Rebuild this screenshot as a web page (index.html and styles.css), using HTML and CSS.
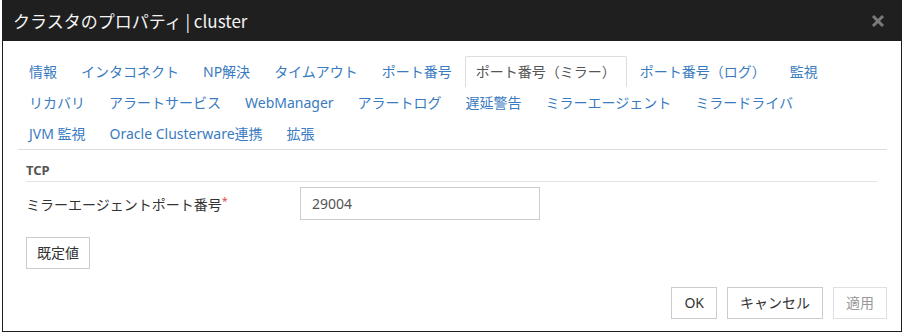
FILE: index.html
```html
<!DOCTYPE html>
<html lang="ja">
<head>
<meta charset="utf-8">
<title>クラスタのプロパティ</title>
<link rel="stylesheet" href="styles.css">
</head>
<body>
<div class="dialog">
  <div class="titlebar">
    <span class="title">クラスタのプロパティ | cluster</span>
    <svg class="close" width="14" height="14" viewBox="0 0 14 14"><path d="M2 2 L12 12 M12 2 L2 12" stroke="#7a7a7a" stroke-width="3" stroke-linecap="butt"/></svg>
  </div>
  <div class="body">
    <ul class="tabs">
      <li class="tab">情報</li>
      <li class="tab">インタコネクト</li>
      <li class="tab">NP解決</li>
      <li class="tab">タイムアウト</li>
      <li class="tab">ポート番号</li>
      <li class="tab active">ポート番号（ミラー）</li>
      <li class="tab">ポート番号（ログ）</li>
      <li class="tab">監視</li>
      <li class="tab">リカバリ</li>
      <li class="tab">アラートサービス</li>
      <li class="tab">WebManager</li>
      <li class="tab">アラートログ</li>
      <li class="tab">遅延警告</li>
      <li class="tab">ミラーエージェント</li>
      <li class="tab">ミラードライバ</li>
      <li class="tab">JVM 監視</li>
      <li class="tab">Oracle Clusterware連携</li>
      <li class="tab">拡張</li>
    </ul>
    <div class="panel">
      <div class="section-title">TCP</div>
      <div class="form-row">
        <label class="label">ミラーエージェントポート番号<span class="req">*</span></label>
        <div class="input">29004</div>
      </div>
      <button class="btn btn-default">既定値</button>
    </div>
  </div>
  <div class="footer">
    <button class="btn">OK</button>
    <button class="btn">キャンセル</button>
    <button class="btn disabled">適用</button>
  </div>
</div>
</body>
</html>
```
FILE: styles.css
```css
html, body {
  margin: 0;
  padding: 0;
  background: #ffffff;
}
body {
  font-family: "Noto Sans", "Noto Sans CJK JP", sans-serif;
  font-size: 14px;
  color: #333;
}
.dialog {
  box-sizing: border-box;
  margin-left: 2px;
  width: 900px;
  height: 332px;
  border: 1px solid #1e1e1e;
  border-top: none;
  display: flex;
  flex-direction: column;
  background: #fff;
}
.titlebar {
  height: 41px;
  margin: 0 -1px;
  background: #1f1f1f;
  display: flex;
  align-items: center;
  justify-content: space-between;
  padding: 0 17px 0 11px;
  flex-shrink: 0;
}
.title {
  color: #f4f4f4;
  font-family: "Noto Sans CJK JP", sans-serif;
  font-size: 17px;
  line-height: 20px;
}
.close {
  display: block;
  margin-top: 1px;
}
.body {
  padding: 15px 14px 0 15px;
}
.tabs {
  list-style: none;
  margin: 0;
  padding: 0 16px 0 0;
  display: flex;
  flex-wrap: wrap;
  border-bottom: 1px solid #dddddd;
}
.tab {
  box-sizing: border-box;
  height: 31px;
  line-height: 29px;
  padding: 0 10px;
  border: 1px solid transparent;
  border-bottom: none;
  margin-right: 2px;
  color: #3a7bbf;
  white-space: nowrap;
}
.tab.active {
  border-color: #dddddd;
  border-radius: 2px 2px 0 0;
  color: #555;
}
.panel {
  padding: 0 10px 0 8px;
}
.section-title {
  font-weight: bold;
  font-size: 13px;
  color: #555;
  line-height: 22px;
  padding-top: 9px;
  border-bottom: 1px solid #e3e3e3;
}
.form-row {
  display: flex;
  align-items: center;
  margin-top: 5px;
}
.label {
  width: 274px;
  color: #333;
  line-height: 20px;
  padding-bottom: 2px;
}
.req {
  color: #d9534f;
  font-size: 11px;
  vertical-align: 5px;
}
.input {
  box-sizing: border-box;
  width: 240px;
  height: 33px;
  border: 1px solid #cccccc;
  padding: 0 11px;
  line-height: 31px;
  color: #555;
}
.btn {
  box-sizing: border-box;
  height: 32px;
  padding: 0 12px;
  border: 1px solid #cccccc;
  background: #fff;
  font-family: "Noto Sans", "Noto Sans CJK JP", sans-serif;
  font-size: 14px;
  color: #333;
  line-height: 30px;
}
.btn-default {
  display: block;
  margin-top: 17px;
  padding: 0 10px;
}
.btn.disabled {
  color: #999;
  border-color: #e0e0e0;
}
.footer {
  margin-top: auto;
  display: flex;
  justify-content: flex-end;
  gap: 10px;
  padding: 0 14px 12px 0;
}
```
